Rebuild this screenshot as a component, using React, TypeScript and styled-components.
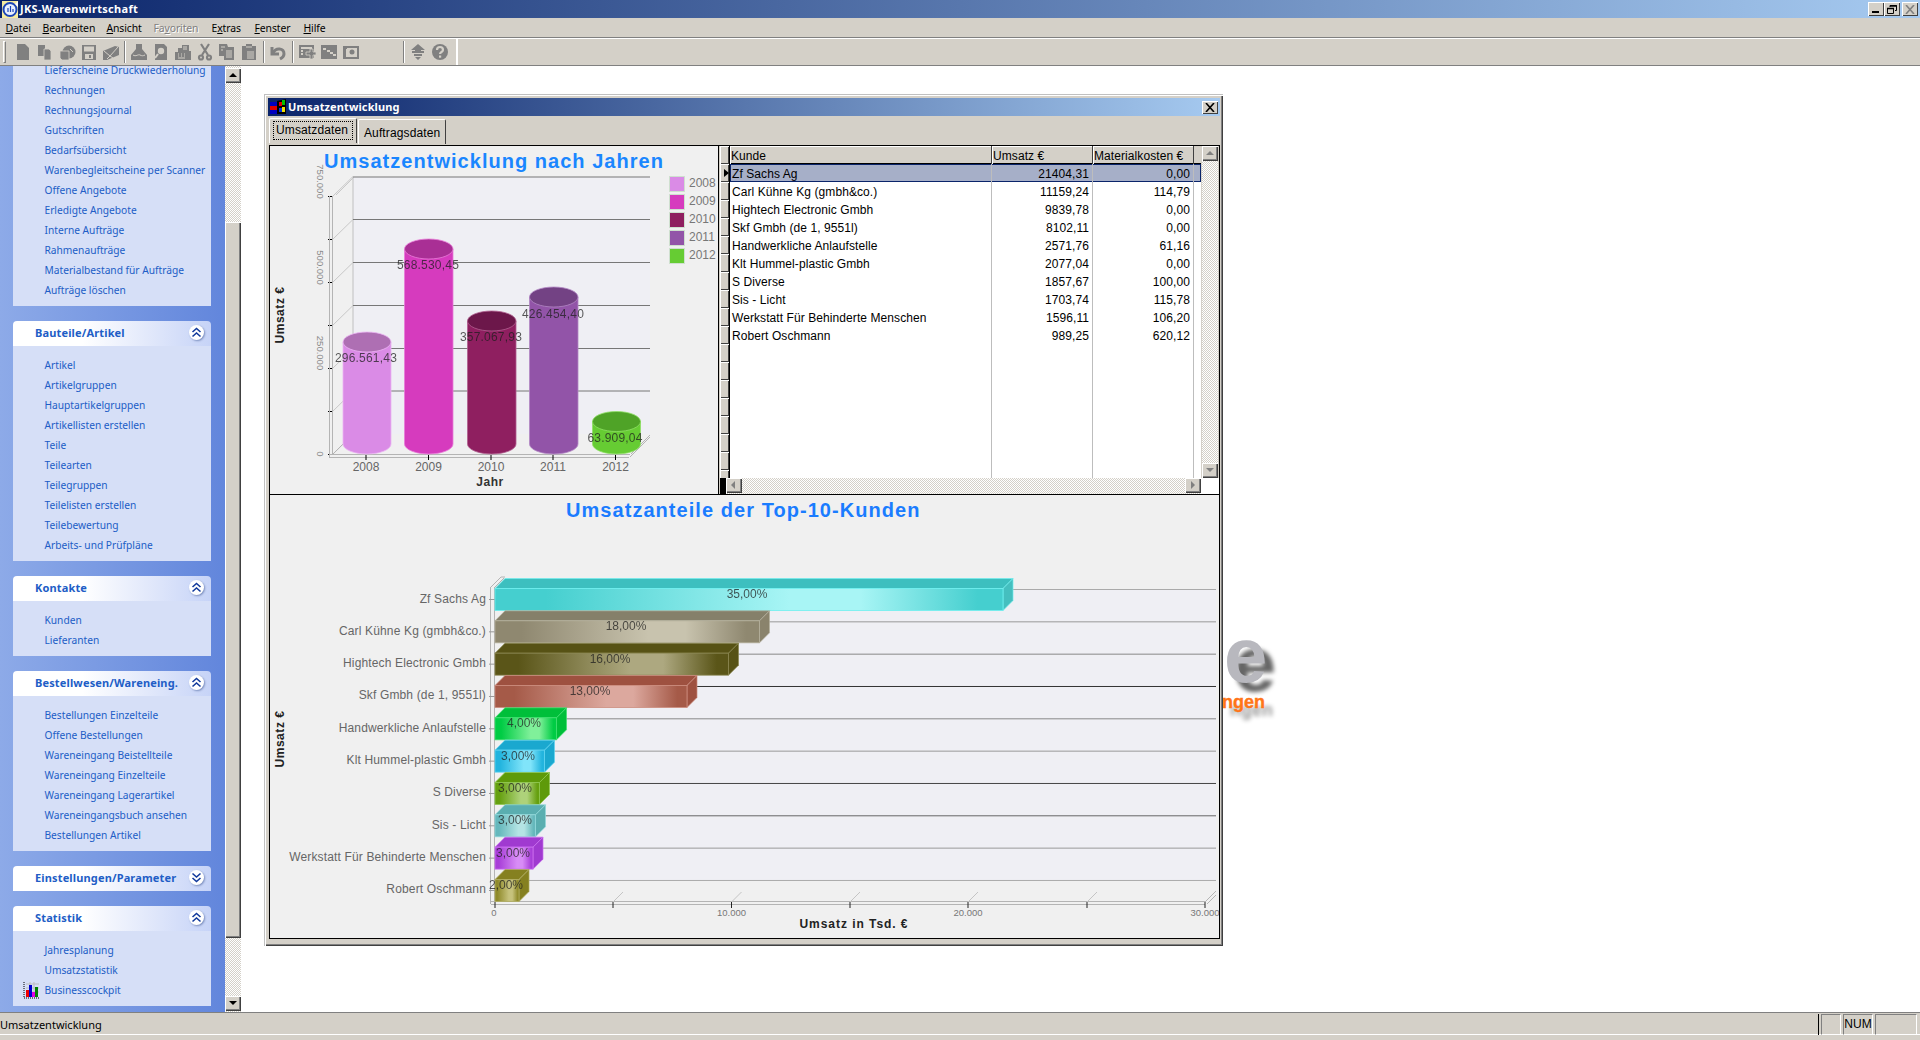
import React from "react";
import styled, { createGlobalStyle } from "styled-components";

const Global = createGlobalStyle`
  html, body { margin: 0; padding: 0; background: #fff; }
  body { font-family: "Liberation Sans", Arial, sans-serif; overflow: hidden; }
  * { box-sizing: border-box; }
`;

const UI = `"Noto Sans", "Liberation Sans", sans-serif`;
const FACE = "#D4D0C8";

const Page = styled.div`
  width: 1920px; height: 1040px; display: flex; flex-direction: column; overflow: hidden; background: ${FACE};
`;
const AppTitle = styled.div`
  height: 18px; flex: none; display: flex; align-items: center; padding: 0 2px;
  background: linear-gradient(90deg, #0A246A 0%, #A6CAF0 100%);
`;
const TitleText = styled.span<{ $sp: number; $lead: number }>`
  font: bold 11px ${UI}; color: #fff; margin-left: ${p => p.$lead}px; line-height: 18px; letter-spacing: ${p => p.$sp}px;
`;
const CaptionButtons = styled.div`
  margin-left: auto; display: flex; padding-right: 0;
`;
const CapBtn = styled.div<{ $gap?: number }>`
  width: 16px; height: 14px; margin-left: ${p => p.$gap ?? 0}px; background: ${FACE}; display: flex; align-items: center; justify-content: center;
  box-shadow: inset 1px 1px 0 #fff, inset -1px -1px 0 #404040;
`;
const MenuBar = styled.div`
  height: 20px; flex: none; display: flex; padding-left: 5.5px; align-items: center; background: ${FACE};
`;
const MenuItem = styled.span<{ $w: number; $off?: boolean }>`
  width: ${p => p.$w}px; font: 10.4px ${UI}; color: ${p => (p.$off ? "#808080" : "#000")};
  text-shadow: ${p => (p.$off ? "1px 1px 0 #fff" : "none")}; white-space: nowrap; letter-spacing: -.1px;
`;
const ToolBar = styled.div`
  height: 28px; flex: none; display: flex; border-top: 1px solid #fff; border-bottom: 1px solid #808080; box-shadow: 0 -1px 0 #808080;
`;
const ToolBand = styled.div`
  width: 458px; display: flex; align-items: center; padding-left: 3px; border-right: 2px solid #fff;
`;
const Gripper = styled.div`
  width: 3px; height: 22px; margin-right: 6px; border: 1px solid; border-color: #fff #808080 #808080 #fff;
`;
const Tool = styled.div`
  width: 22px; height: 18px; display: flex; align-items: center; justify-content: center;
`;
const ToolSep = styled.div<{ $lead?: number }>`
  width: 2px; height: 22px; margin: 0 2.5px 0 ${p => (p.$lead ?? 0) + 2.5}px; border-left: 1px solid #808080; border-right: 1px solid #fff;
`;
const Main = styled.div`
  flex: 1; display: flex; min-height: 0; height: 946px; background: #fff;
`;
const Sidebar = styled.div`
  width: 225px; flex: none; overflow: hidden; background: linear-gradient(90deg, #8DAAE8 0%, #6286DC 100%);
`;
const SideScroll = styled.div`
  margin-top: -15px; padding: 0 14px 0 13px; display: flex; flex-direction: column; gap: 15px;
`;
const Panel = styled.section``;
const PanelHead = styled.div`
  height: 25px; display: flex; align-items: center; padding: 0 7px 2px 22px; border-radius: 4px 4px 0 0;
  background: linear-gradient(90deg, #fff 0%, #fff 35%, #C6D3F7 100%);
  font: bold 11px ${UI}; color: #215DC6; white-space: nowrap; letter-spacing: .15px;
`;
const Chevron = styled.div`
  width: 15px; height: 15px; margin-left: auto; margin-top: -1px; border-radius: 50%; background: #fff; flex: none;
  display: flex; align-items: center; justify-content: center; box-shadow: 1px 1px 2px #7C8FBF;
`;
const PanelBody = styled.div`
  background: #D6DFF7; padding: 9px 0 6px;
`;
const Item = styled.div`
  height: 20px; display: flex; align-items: center; padding: 0 0 1px 9.5px; font: 10.2px ${UI}; color: #215DC6; white-space: nowrap;
`;
const ItemIcon = styled.span`
  width: 22px; flex: none; display: flex; align-items: center;
`;
const VBar = styled.div`
  width: 16px; padding: 2px 0 1px; flex: none; display: flex; flex-direction: column;
  background: repeating-conic-gradient(#fff 0 25%, ${FACE} 0 50%) 0 0 / 2px 2px;
`;
const ArrowBtn = styled.div<{ $dir: "up" | "down" | "left" | "right"; $off?: boolean }>`
  width: 16px; height: 15px; flex: none; background: ${FACE}; position: relative;
  box-shadow: inset 1px 1px 0 #fff, inset -1px -1px 0 #404040, inset -2px -2px 0 #808080;
  &::after {
    content: ""; position: absolute; left: ${p => (p.$dir === "up" || p.$dir === "down" ? 4 : p.$dir === "left" ? 5 : 6)}px;
    top: ${p => (p.$dir === "up" ? 5 : p.$dir === "down" ? 5 : 3)}px; border-style: solid; border-color: transparent;
    border-width: ${p => (p.$dir === "up" ? "0 4px 4px" : p.$dir === "down" ? "4px 4px 0" : p.$dir === "left" ? "4px 4px 4px 0" : "4px 0 4px 4px")};
    ${p => {
      const c = p.$off ? "#808080" : "#000";
      return p.$dir === "up" ? `border-bottom-color:${c};` : p.$dir === "down" ? `border-top-color:${c};` : p.$dir === "left" ? `border-right-color:${c};` : `border-left-color:${c};`;
    }}
  }
`;
const Thumb = styled.div<{ $top: number; $h: number }>`
  width: 16px; height: ${p => p.$h}px; margin-top: ${p => p.$top}px; flex: none; background: ${FACE};
  box-shadow: inset 1px 1px 0 #fff, inset -1px -1px 0 #404040, inset -2px -2px 0 #808080;
`;
const Spring = styled.div`flex: 1;`;
const Desktop = styled.div`
  flex: 1; position: relative; background: #fff; padding: 28px 0 0 23px; overflow: hidden;
`;
const LogoE = styled.div`
  position: absolute; left: 983px; top: 550px; font: bold 78px/1 "Liberation Sans", sans-serif; color: #B8B8BE; text-shadow: 9px 9px 4px #666;
`;
const LogoSub = styled.div`
  position: absolute; left: 981px; top: 627px; font: bold 18px/1 "Liberation Sans", sans-serif; color: #FF7518; text-shadow: 8px 8px 4px #999;
  -webkit-text-stroke: .4px #FF7518;
`;
const Win = styled.div`
  position: relative; z-index: 1; width: 959px; height: 852px; background: ${FACE}; padding: 4px 3px 7px 4px; display: flex; flex-direction: column;
  box-shadow: inset 1px 1px 0 #C0C0C0, inset 2px 2px 0 #fff, inset -1px -1px 0 #404040, inset -2px -2px 0 #808080;
`;
const WinTitle = styled.div`
  height: 18px; flex: none; display: flex; align-items: center; background: linear-gradient(90deg, #0A246A 0%, #A6CAF0 100%);
`;
const WinBtn = styled.div`
  margin-left: auto; margin-right: 2px; width: 16px; height: 13px; background: ${FACE}; display: flex; align-items: center; justify-content: center;
  box-shadow: inset 1px 1px 0 #fff, inset -1px -1px 0 #404040;
`;
const TabRow = styled.div`
  height: 29px; flex: none; display: flex; align-items: flex-end; padding: 0 0 1px 1px;
`;
const Tab = styled.div<{ $active?: boolean }>`
  height: 25px; width: 88px; margin: ${p => (p.$active ? "0 1px 1px 0" : "0")};
  background: ${FACE}; padding: ${p => (p.$active ? "2px 3px 4px" : "2px 0 0 5px")};
  display: flex; align-items: center; font: 12px "Liberation Sans", sans-serif; color: #000; white-space: nowrap; letter-spacing: .12px;
  border-top: 1px solid #fff; border-left: 1px solid #fff; border-right: 1px solid #404040; border-radius: 2px 2px 0 0;
`;
const Focus = styled.span`
  width: 100%; height: 19px; padding-left: 2px; border: 1px dotted #000; display: flex; align-items: center;
`;
const Content = styled.div`
  flex: 1; margin-left: 1px; border: 1px solid #000; border-left-width: 1px; display: flex; flex-direction: column; min-height: 0; background: #F0F0F0;
`;
const Upper = styled.div`
  height: 349px; flex: none; display: flex; border-bottom: 1px solid #000;
`;
const ChartPane = styled.div<{ $w: number; $h: number; $rule?: boolean }>`
  width: ${p => p.$w}px; height: ${p => p.$h}px; flex: none; background: #F0F0F0; overflow: hidden; ${p => (p.$rule ? "border-right: 1px solid #000;" : "")}
  svg { display: block; }
`;
const TablePane = styled.div`
  flex: 1; display: flex; flex-direction: column; background: ${FACE}; min-width: 0;
`;
const TableTop = styled.div`
  height: 332px; flex: none; display: flex; padding-left: 1px;
`;
const Indicators = styled.div`
  width: 10px; flex: none; overflow: hidden; border-right: 1px solid #000; background: #000;
`;
const IndCell = styled.div<{ $cur?: boolean }>`
  height: 18px; background: ${FACE}; position: relative; box-shadow: inset 1px 1px 0 #fff, inset -1px -1px 0 #404040;
  ${p => p.$cur ? `&::after { content: ""; position: absolute; right: 0; top: 5px; border-style: solid; border-width: 4px 0 4px 5px; border-color: transparent transparent transparent #000; }` : ""}
`;
const Data = styled.div`
  width: 471px; margin-right: 1px; flex: none; background: #fff; display: flex; flex-direction: column; font: 12px "Liberation Sans", sans-serif; color: #000; letter-spacing: .08px;
`;
const Columns = `grid-template-columns: 262px 101px 101px 1fr;`;
const HeadRow = styled.div`
  height: 18px; flex: none; display: grid; ${Columns} background: ${FACE}; border-bottom: 1px solid #000;
`;
const HeadCell = styled.div`
  padding-left: 1px; line-height: 20px; box-shadow: inset 1px 1px 0 #fff; border-right: 1px solid #404040; white-space: nowrap;
`;
const Row = styled.div<{ $sel?: boolean }>`
  height: 18px; flex: none; display: grid; ${Columns} position: relative;
  background: ${p => (p.$sel ? "#A6AFC8" : "#fff")};
  ${p => (p.$sel ? "box-shadow: inset 0 0 0 1px #0A246A;" : "")}
`;
const Filler = styled.div`
  flex: 1; display: grid; ${Columns}
`;
const Cell = styled.div<{ $right?: boolean; $blank?: boolean }>`
  padding: 0 3px 0 2px; line-height: 20px; height: 100%; white-space: nowrap; text-align: ${p => (p.$right ? "right" : "left")};
  border-right: 1px solid ${p => (p.$blank ? "transparent" : "#BDBDBD")};
`;
const TableScroll = styled.div`
  width: 16px; flex: none; display: flex; flex-direction: column; justify-content: space-between;
  background: repeating-conic-gradient(#fff 0 25%, ${FACE} 0 50%) 0 0 / 2px 2px;
`;
const TableBottom = styled.div`
  height: 16px; flex: none; display: flex; padding-left: 1px;
`;
const BlackNub = styled.div`width: 6px; background: #000; flex: none;`;
const HScroll = styled.div`
  width: 475px; flex: none; display: flex; justify-content: space-between;
  background: repeating-conic-gradient(#fff 0 25%, ${FACE} 0 50%) 0 0 / 2px 2px;
`;
const Corner = styled.div`flex: 1; background: #fff;`;
const StatusBar = styled.div`
  height: 28px; flex: none; display: flex; align-items: flex-start; border-top: 1px solid #808080; background: ${FACE}; padding: 1px 1px 0 0; position: relative;
  box-shadow: inset 0 -5px 0 ${FACE}, inset 0 -6px 0 #fff;
`;
const StatusText = styled.div`
  flex: 1; font: 11px/21px ${UI}; color: #000; padding-left: 0;
`;
const StatusRule = styled.div`width: 1px; height: 21px; background: #000; margin-right: 2px;`;
const StatusCell = styled.div<{ $w: number }>`
  width: ${p => p.$w}px; height: 21px; margin-right: 2px; font: 12px/19px "Liberation Sans", sans-serif; text-align: center; color: #000;
  border: 1px solid; border-color: #808080 #fff #fff #808080;
`;

const CHART = `"Liberation Sans", Arial, sans-serif`;
const Label = styled.text<{ $size?: number; $bold?: boolean; $c?: string; $sp?: number }>`
  font-family: ${CHART}; font-size: ${p => p.$size ?? 12}px; font-weight: ${p => (p.$bold ? "bold" : "normal")};
  fill: ${p => p.$c ?? "#666"}; letter-spacing: ${p => p.$sp ?? 0}px; dominant-baseline: central;
`;

const G = "#808080";
const B = FACE;
const ToolSvg: React.FC<{ children: React.ReactNode }> = ({ children }) => (
  <svg width="18" height="18" viewBox="0 0 18 18" fill={G}>{children}</svg>
);
const icons: Record<string, React.ReactNode> = {
  new: <path d="M3 1h8l4 4v12H3z" />,
  pages: <><path d="M2 2h7v11H2z" /><path d="M8 6h5l2 2v9H8z" stroke={B} strokeWidth=".8" /></>,
  open: <><circle cx="11" cy="9" r="6.5" /><path d="M2 8h9v9H4l-2-2z" stroke={B} strokeWidth=".8" /><path d="M12 6l3 3" stroke={B} /></>,
  save: <path fillRule="evenodd" d="M2 2h14v15H2zM4 3.5v5h10v-5zM5 11v5h8v-5zM9 12v3h2v-3z" />,
  mail: <><path d="M1 8l12-5 4 1v8L5 17H1z" /><path d="M2 8l6 5 8-9M5 16l3-3 3 2" fill="none" stroke={B} /></>,
  print: <><path d="M6 1h6v5l5 6v5H1v-5l5-6z" /><path d="M3 12c3 2 5-1 7 0s3 1 5 0" fill="none" stroke={B} /></>,
  preview: <><path d="M3 1h9l3 3v13H3z" /><circle cx="9" cy="8" r="4" fill={B} stroke={G} strokeWidth="1.6" /><path d="M6 11l-3 4" stroke={B} strokeWidth="2" /></>,
  fax: <><path d="M8 2h7v6h2v9H1V9h3V5h4z" /><path d="M4 11h1M7 11h1M10 11h1M4 13h1M7 13h1M10 13h1M4 15h7M9 4h4M9 6h4" stroke={B} /></>,
  cut: <g fill="none" stroke={G} strokeWidth="2.2"><path d="M5 1l7 11M13 1L6 12" /><circle cx="5" cy="14.5" r="2" /><circle cx="13" cy="14.5" r="2" /></g>,
  copy: <><path d="M1 1h8l1 3h6v13H6v-4H1z" /><path d="M8 8h6M8 10h6M8 12h6M8 14h6M3 4h4M3 7h2" stroke={B} /></>,
  paste: <><path d="M2 3h4V1h6v2h4v14H2z" /><path d="M7 9h7M7 11h7M7 13h7M7 15h7M6 4h6" stroke={B} /></>,
  undo: <g fill="none" stroke={G} strokeWidth="3"><path d="M3 4v7h7" /><path d="M4 10c3-6 11-5 11 1 0 2-2 4-4 5" /></g>,
  winplus: <><path d="M1 2h15v13H1z" /><path d="M3 4h11v2H3zM3 7h2v2H3zM3 10h2v2H3z" fill={B} /><path d="M8 9h4V6h3v3h3v3h-3v4h-3v-4H8z" stroke={B} strokeWidth=".8" /></>,
  grid: <><path d="M1 2h16v14H1z" /><path d="M3 5h3v2H3zM7 7h3v2H7zM10 9h3v2h-3zM13 11h3v2h-3z" fill={B} /></>,
  image: <><path fillRule="evenodd" d="M1 3h16v13H1zM4 5v9h11V5z" /><path d="M3 3h2v3H3z" /><circle cx="10" cy="9" r="2.5" /></>,
  up: <path d="M9 1l7 6h-4v1h3v2H3V8h3V7H2zM5 11h8v2H5zM6 14h6l-3 3z" />,
  help: <><circle cx="9" cy="9" r="8" /><path d="M6 7c0-4 6-4 6 0 0 2-3 2-3 4" fill="none" stroke={B} strokeWidth="2.2" /><path d="M8 12.5h2.2v2.2H8z" fill={B} /></>,
};
const toolGroups = [
  { lead: 0, items: ["new", "pages", "open", "save", "mail"] },
  { lead: -1, items: ["print", "preview", "fax", "cut", "copy", "paste"] },
  { lead: 0, items: ["undo"] },
  { lead: 0, items: ["winplus", "grid", "image"] },
  { lead: 38, items: ["up", "help"] },
];

const menus: { label: React.ReactNode; w: number; off?: boolean }[] = [
  { label: <><u>D</u>atei</>, w: 37 },
  { label: <><u>B</u>earbeiten</>, w: 64 },
  { label: <><u>A</u>nsicht</>, w: 47 },
  { label: <>Fa<u>v</u>oriten</>, w: 58, off: true },
  { label: <>E<u>x</u>tras</>, w: 43 },
  { label: <><u>F</u>enster</>, w: 49 },
  { label: <><u>H</u>ilfe</>, w: 30 },
];

const panels: { title?: string; open: boolean; items: string[] }[] = [
  { open: true, items: ["Lieferscheine Druckwiederholung", "Rechnungen", "Rechnungsjournal", "Gutschriften", "Bedarfsübersicht", "Warenbegleitscheine per Scanner", "Offene Angebote", "Erledigte Angebote", "Interne Aufträge", "Rahmenaufträge", "Materialbestand für Aufträge", "Aufträge löschen"] },
  { title: "Bauteile/Artikel", open: true, items: ["Artikel", "Artikelgruppen", "Hauptartikelgruppen", "Artikellisten erstellen", "Teile", "Teilearten", "Teilegruppen", "Teilelisten erstellen", "Teilebewertung", "Arbeits- und Prüfpläne"] },
  { title: "Kontakte", open: true, items: ["Kunden", "Lieferanten"] },
  { title: "Bestellwesen/Wareneing.", open: true, items: ["Bestellungen Einzelteile", "Offene Bestellungen", "Wareneingang Beistellteile", "Wareneingang Einzelteile", "Wareneingang Lagerartikel", "Wareneingangsbuch ansehen", "Bestellungen Artikel"] },
  { title: "Einstellungen/Parameter", open: false, items: [] },
  { title: "Statistik", open: true, items: ["Jahresplanung", "Umsatzstatistik", "Businesscockpit"] },
];

const rows = [
  ["Zf Sachs Ag", "21404,31", "0,00"],
  ["Carl Kühne Kg (gmbh&co.)", "11159,24", "114,79"],
  ["Hightech Electronic Gmbh", "9839,78", "0,00"],
  ["Skf Gmbh (de 1, 9551l)", "8102,11", "0,00"],
  ["Handwerkliche Anlaufstelle", "2571,76", "61,16"],
  ["Klt Hummel-plastic Gmbh", "2077,04", "0,00"],
  ["S Diverse", "1857,67", "100,00"],
  ["Sis - Licht", "1703,74", "115,78"],
  ["Werkstatt Für Behinderte Menschen", "1596,11", "106,20"],
  ["Robert Oschmann", "989,25", "620,12"],
];

const ChevronIcon: React.FC<{ open: boolean }> = ({ open }) => (
  <svg width="11" height="11" viewBox="0 0 11 11" fill="none" stroke="#123A9C" strokeWidth="1.6">
    {open ? <path d="M1.5 5L5.5 1.5 9.5 5M1.5 9.5L5.5 6 9.5 9.5" /> : <path d="M1.5 1.5L5.5 5 9.5 1.5M1.5 6L5.5 9.5 9.5 6" />}
  </svg>
);
const CockpitIcon = () => (
  <svg width="16" height="18" viewBox="0 0 16 18">
    <path d="M3 3h13M3 7h13M3 11h13M7 1v15M11 1v15" stroke="#BDBDBD" strokeWidth="1" />
    <path d="M1 1v16h15" stroke="#000" strokeWidth="1" strokeDasharray="1 1" fill="none" />
    <rect x="3" y="9" width="3" height="7" fill="#F00000" />
    <rect x="6" y="4" width="3" height="12" fill="#0000D0" />
    <rect x="9" y="11" width="3" height="5" fill="#E000E0" />
    <rect x="12" y="6" width="3" height="10" fill="#008000" />
  </svg>
);
const AppIcon = () => (
  <svg width="16" height="17" viewBox="0 0 16 17">
    <rect width="16" height="17" fill="#F5EBA0" />
    <circle cx="8" cy="8.5" r="6.5" fill="#E8F0FF" stroke="#1C46B8" strokeWidth="2" />
    <path d="M6 11V7M8.5 11V5M11 11V8" stroke="#1C46B8" strokeWidth="1.2" />
    <path d="M13 3l3 3v-6z" fill="#fff" />
  </svg>
);
const WinIcon = () => (
  <svg width="20" height="18" viewBox="0 0 20 18" style={{ flex: "none" }}>
    <path d="M2 4h7v12H2z" fill="#0000C0" /><path d="M2 8h7v4H2z" fill="#E00000" />
    <path d="M9 3l9-2v15H9z" fill="#000" /><path d="M11 4h3v4h-3z" fill="#E00000" /><path d="M14 2h3v5h-3z" fill="#00C000" /><path d="M11 10h3v4h-3z" fill="#0030E0" /><path d="M14 9h3v5h-3z" fill="#F0E000" />
  </svg>
);

const cyls = [
  { x: 343, w: 48, top: 342, c: "#DA8BE6", t: "#AE6FB3", e: "#EBB4F2", label: "296.561,43", lx: 366, ly: 358, year: "2008", cx: 366 },
  { x: 404.5, w: 48.5, top: 249, c: "#D63BBE", t: "#A92F95", e: "#E87BD8", label: "568.530,45", lx: 428, ly: 265, year: "2009", cx: 428.5 },
  { x: 467.5, w: 48.5, top: 321, c: "#8F1F60", t: "#6C174A", e: "#B0608F", label: "357.067,93", lx: 491, ly: 337, year: "2010", cx: 491 },
  { x: 529.5, w: 48.5, top: 297, c: "#9254A8", t: "#734284", e: "#B388C4", label: "426.454,40", lx: 553, ly: 314, year: "2011", cx: 553 },
  { x: 592.5, w: 48, top: 421.5, c: "#66CC33", t: "#4FA327", e: "#8FE066", label: "63.909,04", lx: 615, ly: 438, year: "2012", cx: 615.5 },
];
const legendColors = ["#DA8BE6", "#D63BBE", "#8F1F60", "#9254A8", "#66CC33"];

const YearChart = () => (
  <svg width="448" height="348" viewBox="270 146 448 348">
    <rect x="270" y="146" width="448" height="348" fill="#F0F0F0" />
    <rect x="353" y="177" width="297" height="257" fill="#EFEFF4" />
    <line x1="353" y1="177" x2="353" y2="434" stroke="#C0C0C0" />
    {[177, 219.5, 262.5, 305.5, 348.5, 391].map(y => <line key={y} x1="353" x2="650" y1={y} y2={y} stroke="#777" />)}
    {[196, 239, 282, 325, 368, 411, 454].map((y, i) => (
      <g key={y}>
        <line x1="333" y1={y} x2="353" y2={y - 19.5} stroke="#C8C8C8" />
        <line x1="328" x2="333" y1={y + 0.5} y2={y + 0.5} stroke="#000" />
        {i === 0 && <line x1="336" y1={y - 1} x2="353" y2={y - 18} stroke="#C8C8C8" />}
      </g>
    ))}
    <path d="M329.5 196V458M332.5 196V454M329 454.5H630M329 457.5H629M630 457l20-20M631 454l19-19M333 454l20-20" fill="none" stroke="#B4B4B4" />
    {cyls.map(c => (
      <g key={c.year}>
        <path d={`M${c.x} ${c.top}V444A${c.w / 2} 10 0 0 0 ${c.x + c.w} 444V${c.top}Z`} fill={c.c} stroke={c.e} strokeWidth=".8" />
        <ellipse cx={c.x + c.w / 2} cy={c.top} rx={c.w / 2} ry="10" fill={c.t} stroke={c.e} strokeWidth=".8" />
        <line x1={c.cx} x2={c.cx} y1="455" y2="460" stroke="#000" />
      </g>
    ))}
    {cyls.map(c => (
      <g key={c.label}>
        <Label x={c.lx} y={c.ly} textAnchor="middle" $sp={0.2} $c="#1E1E1E" opacity=".75">{c.label}</Label>
        <Label x={c.cx} y={467} textAnchor="middle">{c.year}</Label>
      </g>
    ))}
    {["750.000", "500.000", "250.000", "0"].map((t, i) => {
      const y = [181.5, 267.5, 353, 454][i];
      return <Label key={t} $size={9.5} $c="#888" x={0} y={0} textAnchor="middle" transform={`translate(320.5 ${y}) rotate(90)`}>{t}</Label>;
    })}
    <Label x={324} y={161} $size={20} $bold $c="#1A86FF" $sp={1.03}>Umsatzentwicklung nach Jahren</Label>
    <Label x={490} y={482} $bold $c="#333" textAnchor="middle" $sp={0.6}>Jahr</Label>
    <Label x={0} y={0} $bold $c="#222" $sp={0.55} textAnchor="middle" transform="translate(280 315) rotate(-90)">Umsatz €</Label>
    {legendColors.map((c, i) => (
      <g key={c}>
        <rect x="669.5" y={176.5 + 18 * i} width="15" height="15" fill={c} stroke="#CFE0CF" />
        <Label x={689} y={182.5 + 18 * i} $c="#777">{2008 + i}</Label>
      </g>
    ))}
  </svg>
);

const bars = [
  { name: "Zf Sachs Ag", r: 1003, a: "#45CFCF", b: "#A8F5F5", t: "#3DBFBF", s: "#45BFBF", e: "#6FEFEF", l: "35,00%", lx: 747 },
  { name: "Carl Kühne Kg (gmbh&co.)", r: 759.5, a: "#8F8870", b: "#C8C3AE", t: "#85806A", s: "#8A836C", e: "#B5B09C", l: "18,00%", lx: 626 },
  { name: "Hightech Electronic Gmbh", r: 728.5, a: "#5A5518", b: "#ADA880", t: "#575215", s: "#575215", e: "#8A8650", l: "16,00%", lx: 610 },
  { name: "Skf Gmbh (de 1, 9551l)", r: 687, a: "#A55A48", b: "#DCA89E", t: "#9E5140", s: "#9E5140", e: "#CC8C7E", l: "13,00%", lx: 590 },
  { name: "Handwerkliche Anlaufstelle", r: 556.5, a: "#00CC44", b: "#80F09A", t: "#00BF3A", s: "#00BF3A", e: "#40E070", l: "4,00%", lx: 524 },
  { name: "Klt Hummel-plastic Gmbh", r: 544.5, a: "#22B4DE", b: "#80E4FA", t: "#1AA8CF", s: "#1AA8CF", e: "#60D4F0", l: "3,00%", lx: 518 },
  { name: "S Diverse", r: 539.5, a: "#66A010", b: "#AED27A", t: "#5E9A0A", s: "#5E9A0A", e: "#90C850", l: "3,00%", lx: 515 },
  { name: "Sis - Licht", r: 535.5, a: "#66B8BC", b: "#B4E4E4", t: "#5AAEB0", s: "#5AAEB0", e: "#90D8DA", l: "3,00%", lx: 515 },
  { name: "Werkstatt Für Behinderte Menschen", r: 533, a: "#A83FD8", b: "#D88CF6", t: "#A03AD0", s: "#A03AD0", e: "#CC70F0", l: "3,00%", lx: 513 },
  { name: "Robert Oschmann", r: 519, a: "#8F8A2A", b: "#C6C27C", t: "#858020", s: "#858020", e: "#B0AC60", l: "2,00%", lx: 506 },
];
const gridShades = ["#AAA", "#999", "#888", "#333", "#888", "#999", "#444", "#666", "#999", "#AAA"];

const ShareChart = () => (
  <svg width="949" height="443" viewBox="270 495 949 443">
    <defs>
      {bars.map((b, i) => (
        <linearGradient key={b.name} id={`bar${i}`} x1="0" x2="1" y1="0" y2="0">
          <stop offset="0" stopColor={b.a} />
          <stop offset=".1" stopColor={b.a} />
          <stop offset=".58" stopColor={b.b} />
          <stop offset=".72" stopColor={b.b} />
          <stop offset=".95" stopColor={b.a} />
        </linearGradient>
      ))}
    </defs>
    <rect x="270" y="495" width="949" height="443" fill="#F0F0F0" />
    <rect x="505" y="589" width="711" height="291" fill="#EFEFF4" />
    {gridShades.map((c, i) => <line key={i} x1="505" x2="1216" y1={589.5 + 32.33 * i} y2={589.5 + 32.33 * i} stroke={c} />)}
    <path d="M491 587l10-10h4M495 587l9-9M490.5 587V904M494.5 587V902M491 901.5H1205M491 904.5H1205M1205 902l11-11M1207 904l9-9" fill="none" stroke="#B4B4B4" />
    {[613, 731.5, 850, 968, 1087].map(x => <line key={x} x1={x} y1="902" x2={x + 10} y2="892" stroke="#C4C4C4" />)}
    {[495, 613, 731.5, 850, 968, 1087, 1205].map(x => <line key={x} x1={x} x2={x} y1="902" y2="908" stroke="#222" />)}
    {bars.map((b, i) => {
      const y = 588.5 + 32.33 * i;
      const h = 22;
      return (
        <g key={b.name}>
          <line x1="489" x2="495" y1={y + 11} y2={y + 11} stroke="#999" />
          <polygon points={`495,${y} 505,${y - 10} ${b.r + 10},${y - 10} ${b.r},${y}`} fill={b.t} stroke={b.e} strokeWidth=".7" />
          <polygon points={`${b.r},${y} ${b.r + 10},${y - 10} ${b.r + 10},${y + h - 10} ${b.r},${y + h}`} fill={b.s} stroke={b.e} strokeWidth=".7" />
          <rect x="495" y={y} width={b.r - 495} height={h} fill={`url(#bar${i})`} stroke={b.e} strokeWidth=".8" />
        </g>
      );
    })}
    {bars.map((b, i) => (
      <g key={b.l + i}>
        <Label x={486} y={598.5 + 32.33 * i} textAnchor="end" $sp={0.15}>{b.name}</Label>
        <Label x={b.lx} y={594 + 32.33 * i} textAnchor="middle" $c="#1E1E1E" opacity=".75">{b.l}</Label>
      </g>
    ))}
    {[["0", 494], ["10.000", 731.5], ["20.000", 968], ["30.000", 1205]].map(([t, x]) => (
      <Label key={t as string} x={x as number} y={912} textAnchor="middle" $size={9.5} $c="#777">{t}</Label>
    ))}
    <Label x={566} y={510} $size={20} $bold $c="#1A7CFF" $sp={1.05}>Umsatzanteile der Top-10-Kunden</Label>
    <Label x={854} y={924} textAnchor="middle" $bold $c="#222" $sp={0.95}>Umsatz in Tsd. €</Label>
    <Label x={0} y={0} textAnchor="middle" $bold $c="#222" $sp={0.55} transform="translate(279.5 739) rotate(-90)">Umsatz €</Label>
  </svg>
);

export default function App() {
  return (
    <Page>
      <Global />
      <AppTitle>
        <AppIcon />
        <TitleText $lead={2} $sp={0.3}>JKS-Warenwirtschaft</TitleText>
        <CaptionButtons>
          <CapBtn><svg width="10" height="8"><rect x="1" y="6" width="7" height="2" /></svg></CapBtn>
          <CapBtn><svg width="10" height="9" fill="none" stroke="#000"><path d="M3 2V.5h6.5v5H8M.5 3.5h6v5h-6z" /><path d="M0 3.5h7M3 1h7" strokeWidth="1.4" /></svg></CapBtn>
          <CapBtn $gap={2}><svg width="10" height="9" stroke="#808080" strokeWidth="1.6"><path d="M1 0l8 9M9 0L1 9" /></svg></CapBtn>
        </CaptionButtons>
      </AppTitle>
      <MenuBar>
        {menus.map((m, i) => <MenuItem key={i} $w={m.w} $off={m.off}>{m.label}</MenuItem>)}
      </MenuBar>
      <ToolBar>
        <ToolBand>
          <Gripper />
          {toolGroups.map((g, i) => (
            <React.Fragment key={i}>
              {i > 0 && <ToolSep $lead={g.lead} />}
              {g.items.map(k => <Tool key={k}><ToolSvg>{icons[k]}</ToolSvg></Tool>)}
            </React.Fragment>
          ))}
        </ToolBand>
      </ToolBar>
      <Main>
        <Sidebar>
          <SideScroll>
            {panels.map((p, i) => (
              <Panel key={i}>
                {p.title && <PanelHead>{p.title}<Chevron><ChevronIcon open={p.open} /></Chevron></PanelHead>}
                {p.items.length > 0 && (
                  <PanelBody>
                    {p.items.map(t => (
                      <Item key={t}><ItemIcon>{t === "Businesscockpit" && <CockpitIcon />}</ItemIcon>{t}</Item>
                    ))}
                  </PanelBody>
                )}
              </Panel>
            ))}
          </SideScroll>
        </Sidebar>
        <VBar>
          <ArrowBtn $dir="up" />
          <Thumb $top={139} $h={716} />
          <Spring />
          <ArrowBtn $dir="down" />
        </VBar>
        <Desktop>
          <LogoE>e</LogoE>
          <LogoSub>ngen</LogoSub>
          <Win>
            <WinTitle>
              <WinIcon />
              <TitleText $lead={0} $sp={0.12}>Umsatzentwicklung</TitleText>
              <WinBtn><svg width="10" height="9" stroke="#000" strokeWidth="1.6"><path d="M1 0l8 9M9 0L1 9" /></svg></WinBtn>
            </WinTitle>
            <TabRow>
              <Tab $active><Focus>Umsatzdaten</Focus></Tab>
              <Tab>Auftragsdaten</Tab>
            </TabRow>
            <Content>
              <Upper>
                <ChartPane $w={449} $h={348} $rule><YearChart /></ChartPane>
                <TablePane>
                  <TableTop>
                    <Indicators>
                      {Array.from({ length: 19 }, (_, i) => <IndCell key={i} $cur={i === 1} />)}
                    </Indicators>
                    <Data>
                      <HeadRow>
                        <HeadCell>Kunde</HeadCell>
                        <HeadCell>Umsatz €</HeadCell>
                        <HeadCell>Materialkosten €</HeadCell>
                      </HeadRow>
                      {rows.map((r, i) => (
                        <Row key={r[0]} $sel={i === 0}>
                          <Cell>{r[0]}</Cell>
                          <Cell $right>{r[1]}</Cell>
                          <Cell $right>{r[2]}</Cell>
                          <Cell $blank />
                        </Row>
                      ))}
                      <Filler><Cell /><Cell /><Cell /><Cell $blank /></Filler>
                    </Data>
                    <TableScroll>
                      <ArrowBtn $dir="up" $off />
                      <ArrowBtn $dir="down" $off />
                    </TableScroll>
                  </TableTop>
                  <TableBottom>
                    <BlackNub />
                    <HScroll>
                      <ArrowBtn $dir="left" $off />
                      <ArrowBtn $dir="right" $off />
                    </HScroll>
                    <Corner />
                  </TableBottom>
                </TablePane>
              </Upper>
              <ChartPane $w={949} $h={443}><ShareChart /></ChartPane>
            </Content>
          </Win>
        </Desktop>
      </Main>
      <StatusBar>
        <StatusText>Umsatzentwicklung</StatusText>
        <StatusRule />
        <StatusCell $w={20} />
        <StatusCell $w={30}>NUM</StatusCell>
        <StatusCell $w={42} />
      </StatusBar>
    </Page>
  );
}
